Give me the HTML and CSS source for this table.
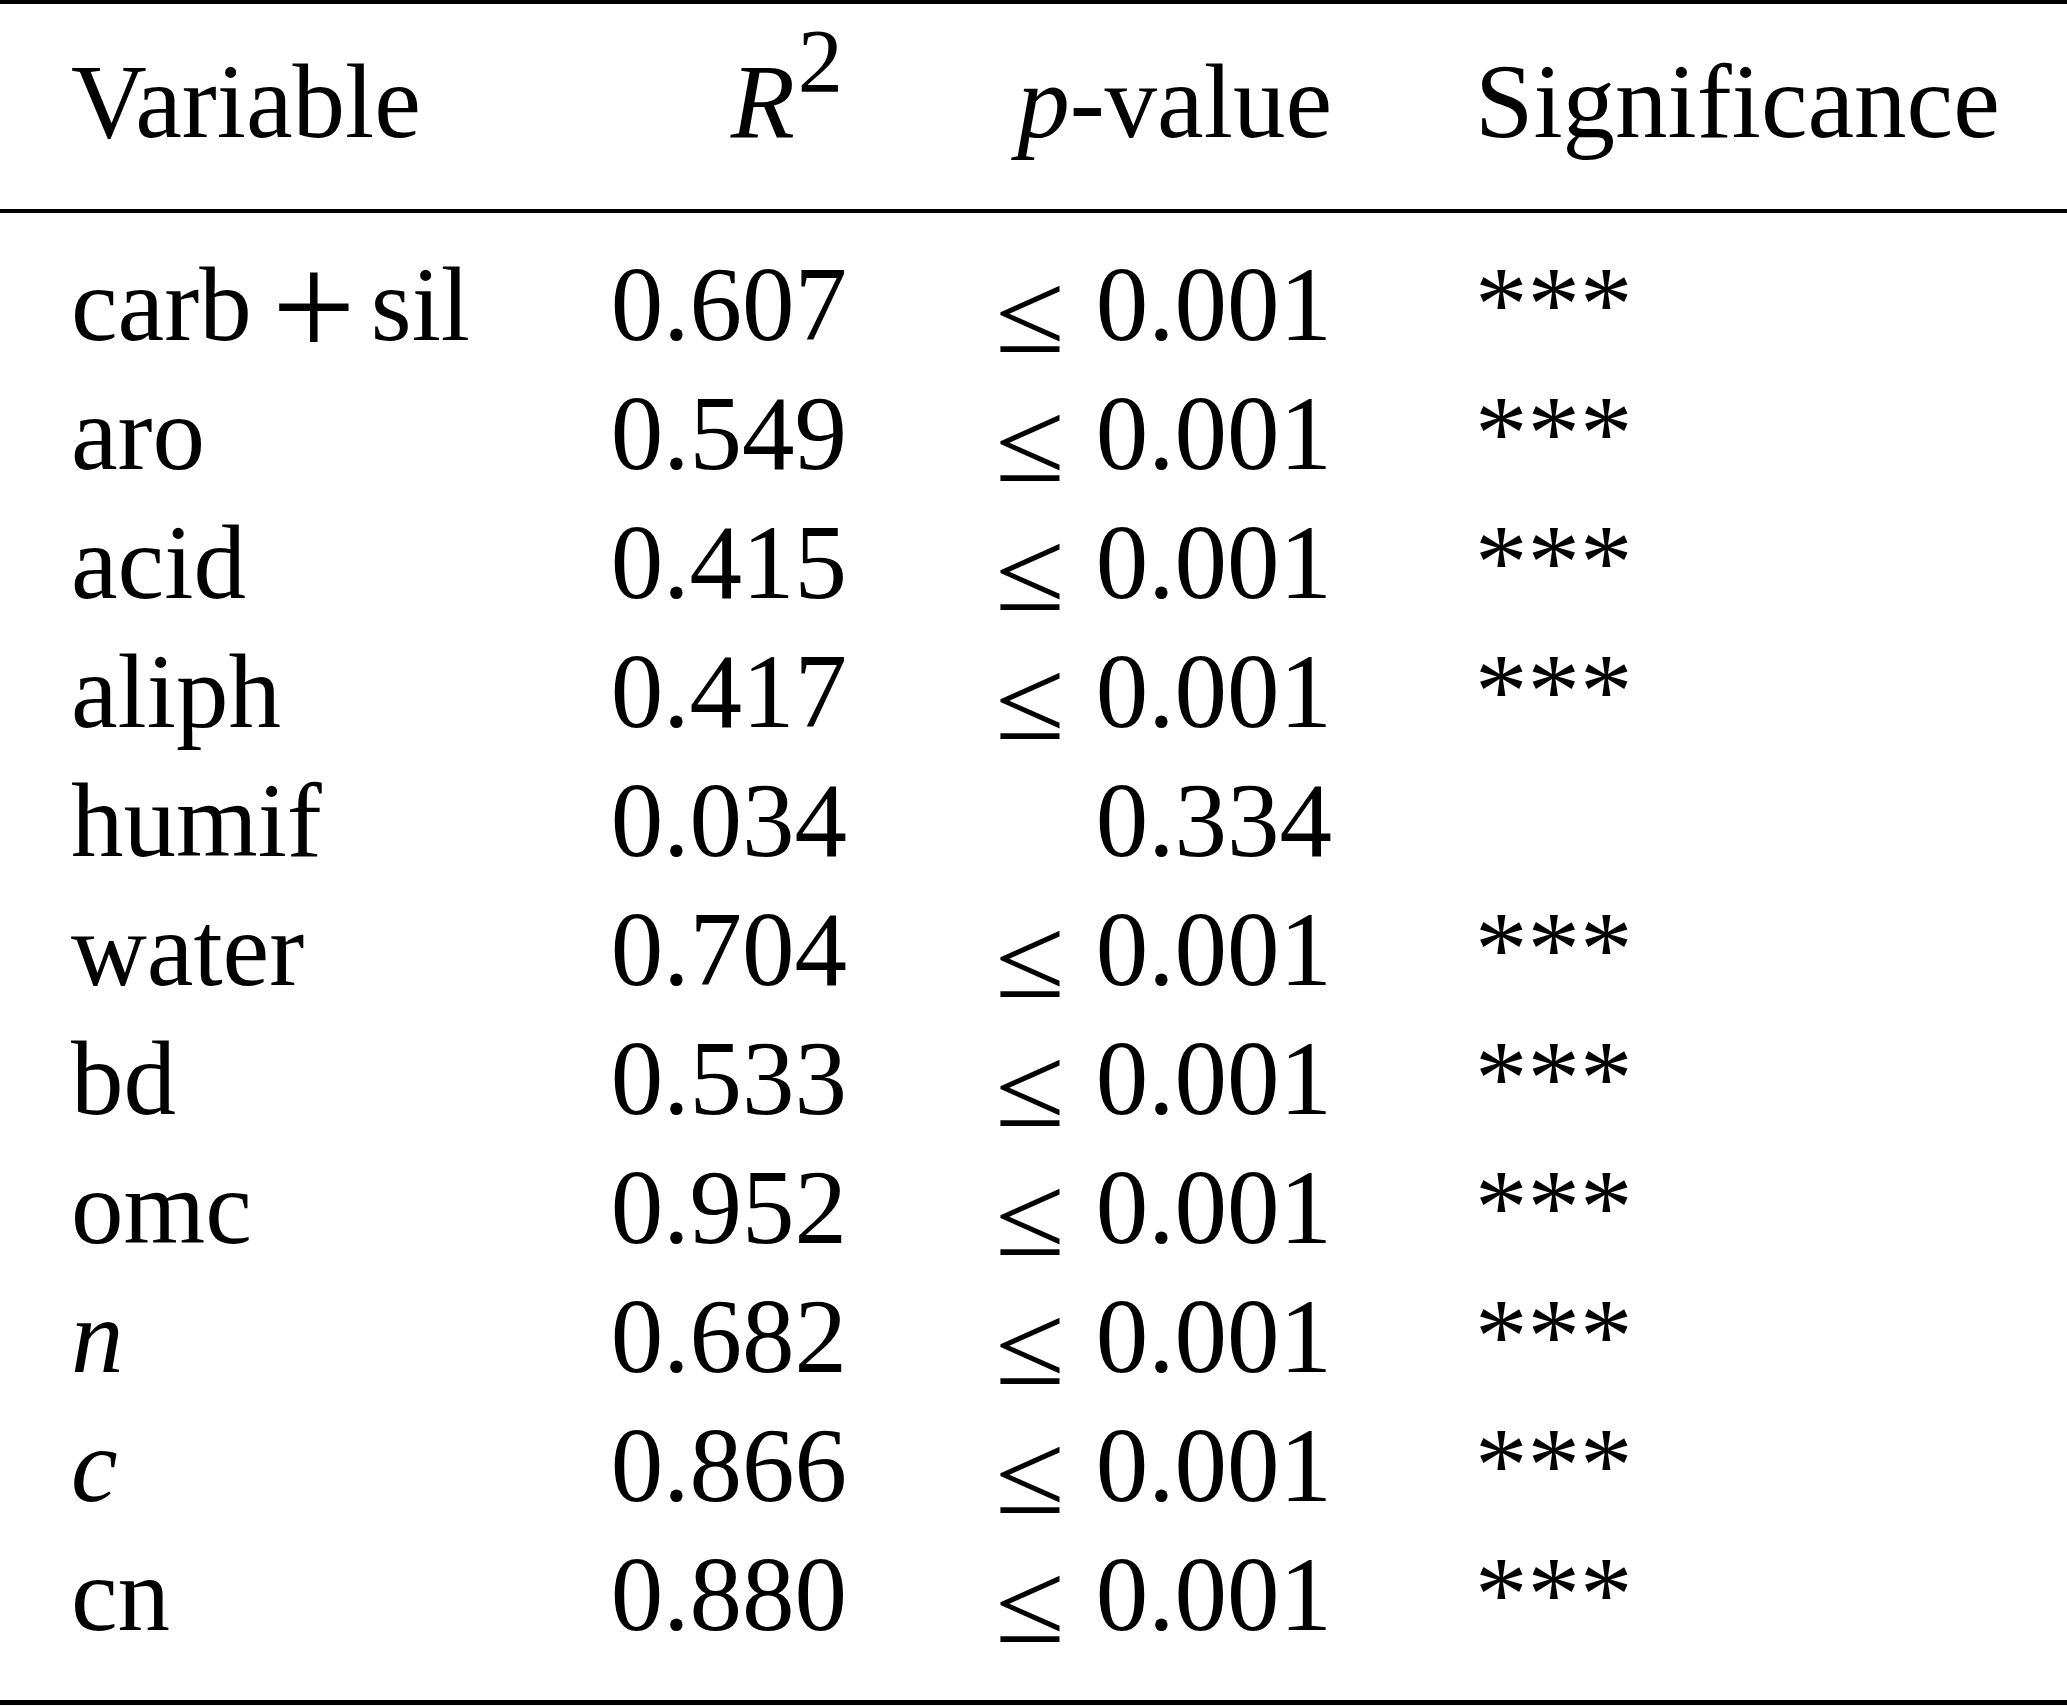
FILE: index.html
```html
<!DOCTYPE html>
<html lang="en">
<head>
<meta charset="utf-8">
<title>Regression table</title>
<link rel="stylesheet" href="styles.css">
</head>
<body>
<div class="table" role="table">
  <div class="row head" role="row">
    <div class="cell var" role="columnheader">Variable</div>
    <div class="cell num" role="columnheader"><i>R</i><sup class="sq">2</sup></div>
    <div class="cell num" role="columnheader"><i>p</i>-value</div>
    <div class="cell sig" role="columnheader">Significance</div>
  </div>
  <div class="body" role="rowgroup">
    <div class="row" role="row"><div class="cell var">carb<span class="op">+</span>sil</div><div class="cell num">0.607</div><div class="cell num"><span class="le">≤</span>0.001</div><div class="cell sig">***</div></div>
    <div class="row" role="row"><div class="cell var">aro</div><div class="cell num">0.549</div><div class="cell num"><span class="le">≤</span>0.001</div><div class="cell sig">***</div></div>
    <div class="row" role="row"><div class="cell var">acid</div><div class="cell num">0.415</div><div class="cell num"><span class="le">≤</span>0.001</div><div class="cell sig">***</div></div>
    <div class="row" role="row"><div class="cell var">aliph</div><div class="cell num">0.417</div><div class="cell num"><span class="le">≤</span>0.001</div><div class="cell sig">***</div></div>
    <div class="row" role="row"><div class="cell var">humif</div><div class="cell num">0.034</div><div class="cell num">0.334</div><div class="cell sig"></div></div>
    <div class="row" role="row"><div class="cell var">water</div><div class="cell num">0.704</div><div class="cell num"><span class="le">≤</span>0.001</div><div class="cell sig">***</div></div>
    <div class="row" role="row"><div class="cell var">bd</div><div class="cell num">0.533</div><div class="cell num"><span class="le">≤</span>0.001</div><div class="cell sig">***</div></div>
    <div class="row" role="row"><div class="cell var">omc</div><div class="cell num">0.952</div><div class="cell num"><span class="le">≤</span>0.001</div><div class="cell sig">***</div></div>
    <div class="row" role="row"><div class="cell var"><i>n</i></div><div class="cell num">0.682</div><div class="cell num"><span class="le">≤</span>0.001</div><div class="cell sig">***</div></div>
    <div class="row" role="row"><div class="cell var"><i>c</i></div><div class="cell num">0.866</div><div class="cell num"><span class="le">≤</span>0.001</div><div class="cell sig">***</div></div>
    <div class="row" role="row"><div class="cell var">cn</div><div class="cell num">0.880</div><div class="cell num"><span class="le">≤</span>0.001</div><div class="cell sig">***</div></div>
  </div>
</div>
</body>
</html>
```

FILE: styles.css
```css
html, body {
  margin: 0;
  padding: 0;
  background: #fff;
}

body {
  font-family: "Liberation Serif", "Times New Roman", serif;
  font-size: 105px;
  color: #000;
}

.table {
  border-top: 4px solid #000;
  border-bottom: 5px solid #000;
}

.row {
  display: grid;
  grid-template-columns: 500px 276px 485px 1fr;
  padding-left: 71px;
  line-height: 129px;
  white-space: nowrap;
}

.head {
  padding-top: 33px;
  padding-bottom: 43px;
  border-bottom: 4px solid #000;
}

.body {
  padding: 27px 0 41px;
}

.cell {
  min-width: 0;
}

.num {
  text-align: right;
}

.sig {
  padding-left: 143px;
}

.sq {
  font-size: 0.86em;
  line-height: 0;
  vertical-align: 45px;
  margin-left: 3px;
  margin-right: 4px;
}

.op {
  font-size: 1.42em;
  line-height: 0;
  vertical-align: -17px;
  margin: 0 15px 0 20px;
}

.le {
  display: inline-block;
  font-size: 1.1em;
  line-height: 0;
  vertical-align: -12px;
  margin-right: 37px;
  transform: scaleX(1.1);
  transform-origin: left center;
}
```
